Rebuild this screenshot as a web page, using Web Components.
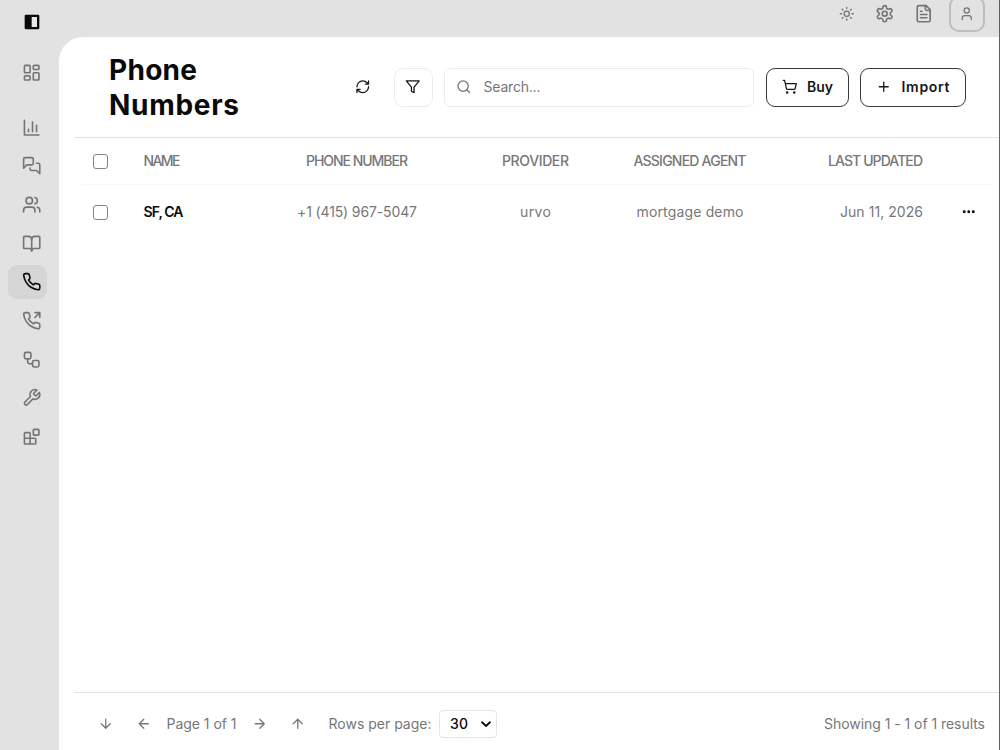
<!DOCTYPE html>
<html lang="en">
<head>
<meta charset="utf-8">
<title>Phone Numbers</title>
<style>
  html, body { margin: 0; height: 100%; overflow: hidden; }
  body { font: 14px/20px Inter, "Liberation Sans", sans-serif; color: #777; background: #e2e2e2; }
</style>
</head>
<body>
<app-shell></app-shell>

<script>
const ICONS = {
  dashboard: '<rect x="3" y="3" width="7" height="9" rx="1"/><rect x="14" y="3" width="7" height="5" rx="1"/><rect x="14" y="12" width="7" height="9" rx="1"/><rect x="3" y="16" width="7" height="5" rx="1"/>',
  chart: '<path d="M3 3v18h18M18 17V9M13 17V5M8 17v-3"/>',
  messages: '<path d="M14 9a2 2 0 0 1-2 2H6l-4 4V4a2 2 0 0 1 2-2h8a2 2 0 0 1 2 2z"/><path d="M18 9h2a2 2 0 0 1 2 2v11l-4-4h-6a2 2 0 0 1-2-2v-1"/>',
  users: '<path d="M16 21v-2a4 4 0 0 0-4-4H6a4 4 0 0 0-4 4v2"/><circle cx="9" cy="7" r="4"/><path d="M22 21v-2a4 4 0 0 0-3-3.87M16 3.13a4 4 0 0 1 0 7.75"/>',
  book: '<path d="M12 7v14"/><path d="M3 18a1 1 0 0 1-1-1V4a1 1 0 0 1 1-1h5a4 4 0 0 1 4 4 4 4 0 0 1 4-4h5a1 1 0 0 1 1 1v13a1 1 0 0 1-1 1h-6a3 3 0 0 0-3 3 3 3 0 0 0-3-3z"/>',
  phone: '<path d="M22 16.92v3a2 2 0 0 1-2.18 2 19.79 19.79 0 0 1-8.63-3.07 19.5 19.5 0 0 1-6-6 19.79 19.79 0 0 1-3.07-8.67A2 2 0 0 1 4.11 2h3a2 2 0 0 1 2 1.72 12.84 12.84 0 0 0 .7 2.81 2 2 0 0 1-.45 2.11L8.09 9.91a16 16 0 0 0 6 6l1.27-1.27a2 2 0 0 1 2.11-.45 12.84 12.84 0 0 0 2.81.7A2 2 0 0 1 22 16.92z"/>',
  workflow: '<rect x="3" y="3" width="8" height="8" rx="2"/><path d="M7 11v4a2 2 0 0 0 2 2h4"/><rect x="13" y="13" width="8" height="8" rx="2"/>',
  wrench: '<path d="M14.7 6.3a1 1 0 0 0 0 1.4l1.6 1.6a1 1 0 0 0 1.4 0l3.77-3.77a6 6 0 0 1-7.94 7.94l-6.91 6.91a2.12 2.12 0 0 1-3-3l6.91-6.91a6 6 0 0 1 7.94-7.94l-3.76 3.76z"/>',
  blocks: '<rect x="14" y="3" width="7" height="7" rx="1"/><path d="M10 21V8a1 1 0 0 0-1-1H4a1 1 0 0 0-1 1v12a1 1 0 0 0 1 1h12a1 1 0 0 0 1-1v-5a1 1 0 0 0-1-1H3"/>',
  sun: '<circle cx="12" cy="12" r="4"/><path d="M12 2v2M12 20v2M4.93 4.93l1.41 1.41M17.66 17.66l1.41 1.41M2 12h2M20 12h2M6.34 17.66l-1.41 1.41M19.07 4.93l-1.41 1.41"/>',
  settings: '<path d="M12.22 2h-.44a2 2 0 0 0-2 2v.18a2 2 0 0 1-1 1.73l-.43.25a2 2 0 0 1-2 0l-.15-.08a2 2 0 0 0-2.73.73l-.22.38a2 2 0 0 0 .73 2.73l.15.1a2 2 0 0 1 1 1.72v.51a2 2 0 0 1-1 1.74l-.15.09a2 2 0 0 0-.73 2.73l.22.38a2 2 0 0 0 2.73.73l.15-.08a2 2 0 0 1 2 0l.43.25a2 2 0 0 1 1 1.73V20a2 2 0 0 0 2 2h.44a2 2 0 0 0 2-2v-.18a2 2 0 0 1 1-1.73l.43-.25a2 2 0 0 1 2 0l.15.08a2 2 0 0 0 2.73-.73l.22-.39a2 2 0 0 0-.73-2.73l-.15-.08a2 2 0 0 1-1-1.74v-.5a2 2 0 0 1 1-1.74l.15-.09a2 2 0 0 0 .73-2.73l-.22-.38a2 2 0 0 0-2.73-.73l-.15.08a2 2 0 0 1-2 0l-.43-.25a2 2 0 0 1-1-1.73V4a2 2 0 0 0-2-2z"/><circle cx="12" cy="12" r="3"/>',
  file: '<path d="M15 2H6a2 2 0 0 0-2 2v16a2 2 0 0 0 2 2h12a2 2 0 0 0 2-2V7Z"/><path d="M14 2v4a2 2 0 0 0 2 2h4M10 9H8M16 13H8M16 17H8"/>',
  user: '<path d="M19 21v-2a4 4 0 0 0-4-4H9a4 4 0 0 0-4 4v2"/><circle cx="12" cy="7" r="4"/>',
  refresh: '<path d="M3 12a9 9 0 0 1 9-9 9.75 9.75 0 0 1 6.74 2.74L21 8M21 3v5h-5M21 12a9 9 0 0 1-9 9 9.75 9.75 0 0 1-6.74-2.74L3 16M8 16H3v5"/>',
  filter: '<path d="M22 3H2l8 9.46V19l4 2v-8.54z"/>',
  search: '<circle cx="11" cy="11" r="8"/><path d="m21 21-4.3-4.3"/>',
  cart: '<circle cx="8" cy="21" r="1"/><circle cx="19" cy="21" r="1"/><path d="M2.05 2.05h2l2.66 12.42a2 2 0 0 0 2 1.58h9.78a2 2 0 0 0 1.95-1.57l1.65-7.43H5.12"/>',
  plus: '<path d="M5 12h14M12 5v14"/>',
  dots: '<g fill="currentColor"><circle cx="12" cy="12" r="1"/><circle cx="19" cy="12" r="1"/><circle cx="5" cy="12" r="1"/></g>',
  down: '<path d="M12 5v14M19 12l-7 7-7-7"/>',
  left: '<path d="m12 19-7-7 7-7M19 12H5"/>',
  right: '<path d="M5 12h14M12 5l7 7-7 7"/>',
  up: '<path d="m5 12 7-7 7 7M12 19V5"/>',
  chevron: '<path d="m4 8.5 8 7.5 8-7.5"/>',
  panel: '<rect x="1" y="1" width="22" height="22" rx="2" fill="currentColor" stroke="none"/><path d="M11.5 4.5h8v15h-8z" fill="#e9e9e9" stroke="none"/>'
};
ICONS.outgoing = ICONS.phone + '<path d="M22 8V2h-6M16 8l6-6"/>';

class UiIcon extends HTMLElement {
  constructor() {
    super();
    this.attachShadow({ mode: 'open' });
  }

  connectedCallback() {
    const size = this.getAttribute('size') || '19.4';
    const stroke = this.getAttribute('stroke') || '2';
    this.shadowRoot.innerHTML = `
      <style>
        :host { display: block; flex: none; width: ${size}px; height: ${size}px; }
        svg { display: block; width: 100%; height: 100%; overflow: visible; }
      </style>
      <svg viewBox="0 0 24 24" fill="none" stroke="currentColor" stroke-width="${stroke}"
        stroke-linecap="round" stroke-linejoin="round">${ICONS[this.getAttribute('name')]}</svg>
    `;
  }
}
customElements.define('ui-icon', UiIcon);

// One line of text, tracked so that it fills the given width.
class FitText extends HTMLElement {
  constructor() {
    super();
    this.attachShadow({ mode: 'open' });
    this.shadowRoot.innerHTML = `
      <style>
        :host { display: block; flex: none; white-space: nowrap; }
        span { display: inline-block; }
      </style>
      <span><slot></slot></span>
    `;
  }

  connectedCallback() {
    const width = parseFloat(this.getAttribute('width'));
    const span = this.shadowRoot.querySelector('span');
    const natural = span.getBoundingClientRect().width;
    const count = this.textContent.length;
    if (!natural || !count) return;
    const tracking = (width - natural) / (count - 1);
    span.style.letterSpacing = `${tracking}px`;
    span.style.marginRight = `${-tracking}px`;
  }
}
customElements.define('fit-text', FitText);

class NavItem extends HTMLElement {
  constructor() {
    super();
    this.attachShadow({ mode: 'open' });
  }

  connectedCallback() {
    this.shadowRoot.innerHTML = `
      <style>
        :host { display: flex; align-items: center; height: 34.8px; padding-left: 13.6px; border-radius: 9px; color: #747474; }
        :host([active]) { background: #d5d5d5; color: #0a0a0a; }
      </style>
      <ui-icon name="${this.getAttribute('icon')}"></ui-icon>
    `;
  }
}
customElements.define('nav-item', NavItem);

class SideBar extends HTMLElement {
  constructor() {
    super();
    this.attachShadow({ mode: 'open' });
  }

  connectedCallback() {
    this.shadowRoot.innerHTML = `
      <style>
        :host { display: block; box-sizing: border-box; padding: 13.5px 12px 0 8px; }
        .logo { display: flex; height: 17px; margin: 0 0 25.2px 16px; color: #090909; }
        .group { display: grid; gap: 3.85px; margin-top: 19.5px; }
      </style>
      <div class="logo"><ui-icon name="panel" size="16"></ui-icon></div>
      <nav-item icon="dashboard"></nav-item>
      <div class="group">
        <nav-item icon="chart"></nav-item>
        <nav-item icon="messages"></nav-item>
        <nav-item icon="users"></nav-item>
        <nav-item icon="book"></nav-item>
        <nav-item icon="phone" active></nav-item>
        <nav-item icon="outgoing"></nav-item>
        <nav-item icon="workflow"></nav-item>
        <nav-item icon="wrench"></nav-item>
        <nav-item icon="blocks"></nav-item>
      </div>
    `;
  }
}
customElements.define('side-bar', SideBar);

class TopBar extends HTMLElement {
  constructor() {
    super();
    this.attachShadow({ mode: 'open' });
  }

  connectedCallback() {
    this.shadowRoot.innerHTML = `
      <style>
        :host { display: flex; align-items: center; justify-content: flex-end; box-sizing: border-box; height: 37px; padding: 0 14.5px 10px 0; overflow: hidden; color: #747474; }
        .sun { margin-right: 20.5px; }
        .settings { margin-right: 19.2px; }
        .file { margin-right: 15.5px; }
        .avatar { display: grid; place-items: center; box-sizing: border-box; width: 36px; height: 36px; margin: -6px 0; border: 2px solid #bdbdbd; border-radius: 10px; }
      </style>
      <ui-icon class="sun" name="sun" size="15.5"></ui-icon>
      <ui-icon class="settings" name="settings"></ui-icon>
      <ui-icon class="file" name="file"></ui-icon>
      <div class="avatar"><ui-icon name="user" size="15.5"></ui-icon></div>
    `;
  }
}
customElements.define('top-bar', TopBar);

class UiButton extends HTMLElement {
  constructor() {
    super();
    this.attachShadow({ mode: 'open' });
  }

  connectedCallback() {
    this.shadowRoot.innerHTML = `
      <style>
        :host { display: flex; flex: none; align-items: center; box-sizing: border-box; height: 39px; padding: 0 15px; gap: 9.5px; border: 1px solid #3a3a3a; border-radius: 9px; color: #171717; font-weight: 600; }
        :host([subtle]) { width: 39px; padding: 0; justify-content: center; border-color: #ececec; }
        :host([ghost]) { width: 39px; padding: 0; justify-content: center; border-color: transparent; }
      </style>
      <ui-icon name="${this.getAttribute('icon')}" size="15.5"></ui-icon><slot></slot>
    `;
  }
}
customElements.define('ui-button', UiButton);

class PageHeader extends HTMLElement {
  constructor() {
    super();
    this.attachShadow({ mode: 'open' });
  }

  connectedCallback() {
    this.shadowRoot.innerHTML = `
      <style>
        :host { display: flex; align-items: center; box-sizing: border-box; height: 101px; padding: 0 33.5px 0 35px; border-bottom: 1px solid #e3e3e3; }
        h1 { margin: 0; padding-top: 2px; width: 234.5px; font-size: 28px; line-height: 34.8px; font-weight: 700; color: #0a0a0a; }
        .search { display: flex; flex: 1; align-items: center; box-sizing: border-box; height: 39px; margin: 0 12px 0 11px; padding-left: 11.5px; gap: 12px; border: 1px solid #ececec; border-radius: 6px; }
        .buy { margin-right: 11px; width: 83px; }
        .import { width: 105.5px; }
        .import fit-text { margin-left: 0.5px; }
        .refresh { margin-right: 11px; }
      </style>
      <h1><fit-text width="88">Phone</fit-text><fit-text width="130">Numbers</fit-text></h1>
      <ui-button class="refresh" ghost icon="refresh"></ui-button>
      <ui-button subtle icon="filter"></ui-button>
      <div class="search"><ui-icon name="search" size="15.5"></ui-icon><fit-text width="57">Search...</fit-text></div>
      <ui-button class="buy" icon="cart"><fit-text width="26">Buy</fit-text></ui-button>
      <ui-button class="import" icon="plus"><fit-text width="48">Import</fit-text></ui-button>
    `;
  }
}
customElements.define('page-header', PageHeader);

class TableRow extends HTMLElement {
  constructor() {
    super();
    this.attachShadow({ mode: 'open' });
    this.shadowRoot.innerHTML = `
      <style>
        :host { display: grid; grid-template-columns: 61px 124px 180px 177px 132px 167px 1fr; align-items: center; justify-items: center; height: 54px; margin: 0 7px 0 8px; }
        :host([head]) { height: 46px; border-bottom: 1px solid #f7f7f7; font-weight: 500; }
        i { box-sizing: border-box; width: 15px; height: 15px; justify-self: start; margin-left: 11px; border: 1px solid #848484; border-radius: 3px; }
        ::slotted([slot=name]) { justify-self: start; margin-left: 0.5px; }
        ::slotted([slot=updated]) { justify-self: end; }
        ::slotted([slot=menu]) { margin-left: 22.5px; color: #0a0a0a; }
      </style>
      <i></i><slot name="name"></slot><slot></slot><slot name="updated"></slot><slot name="menu"></slot>
    `;
  }
}
customElements.define('table-row', TableRow);

class NumberTable extends HTMLElement {
  constructor() {
    super();
    this.attachShadow({ mode: 'open' });
  }

  connectedCallback() {
    this.shadowRoot.innerHTML = `
      <style>
        :host { display: block; flex: 1; }
        .strong { color: #0a0a0a; font-weight: 600; }
      </style>
      <table-row head>
        <fit-text slot="name" width="37">NAME</fit-text>
        <fit-text width="102">PHONE NUMBER</fit-text>
        <fit-text width="67">PROVIDER</fit-text>
        <fit-text width="113">ASSIGNED AGENT</fit-text>
        <fit-text slot="updated" width="95">LAST UPDATED</fit-text>
      </table-row>
      <table-row>
        <fit-text class="strong" slot="name" width="40">SF, CA</fit-text>
        <fit-text width="120">+1 (415) 967-5047</fit-text>
        <fit-text width="31">urvo</fit-text>
        <fit-text width="107">mortgage demo</fit-text>
        <fit-text slot="updated" width="83">Jun 11, 2026</fit-text>
        <ui-icon slot="menu" name="dots" size="15.5" stroke="2.5"></ui-icon>
      </table-row>
    `;
  }
}
customElements.define('number-table', NumberTable);

class PageFooter extends HTMLElement {
  constructor() {
    super();
    this.attachShadow({ mode: 'open' });
  }

  connectedCallback() {
    this.shadowRoot.innerHTML = `
      <style>
        :host { display: flex; align-items: center; box-sizing: border-box; height: 58px; padding: 4px 14px 0 23.5px; border-top: 1px solid #e3e3e3; }
        .pager { display: flex; align-items: center; }
        .left { margin: 0 15px 0 23px; }
        .right { margin: 0 23px 0 15px; }
        .rows { margin: 0 7.5px 0 23px; }
        .select { display: flex; align-items: center; justify-content: space-between; box-sizing: border-box; width: 58px; height: 28px; padding: 0 4px 0 10px; border: 1px solid #e5e5e5; border-radius: 4px; color: #0a0a0a; font-weight: 500; }
        .total { margin-left: auto; }
      </style>
      <div class="pager">
        <ui-icon name="down" size="15.5"></ui-icon>
        <ui-icon class="left" name="left" size="15.5"></ui-icon>
        <fit-text width="70">Page 1 of 1</fit-text>
        <ui-icon class="right" name="right" size="15.5"></ui-icon>
        <ui-icon name="up" size="15.5"></ui-icon>
      </div>
      <fit-text class="rows" width="103">Rows per page:</fit-text>
      <div class="select"><fit-text width="18">30</fit-text><ui-icon name="chevron" size="12" stroke="3.6"></ui-icon></div>
      <fit-text class="total" width="161">Showing 1 - 1 of 1 results</fit-text>
    `;
  }
}
customElements.define('page-footer', PageFooter);

class AppShell extends HTMLElement {
  constructor() {
    super();
    this.attachShadow({ mode: 'open' });
  }

  connectedCallback() {
    this.shadowRoot.innerHTML = `
      <style>
        :host { display: grid; grid-template: 37px 1fr / 59px 1fr; box-sizing: border-box; height: 100vh; border-right: 1px solid #606060; background: #e2e2e2; }
        side-bar { grid-row: 1 / 3; }
        main { display: flex; flex-direction: column; min-width: 0; padding-left: 15px; border-top-left-radius: 24px; background: #fff; }
      </style>
      <side-bar></side-bar>
      <top-bar></top-bar>
      <main>
        <page-header></page-header>
        <number-table></number-table>
        <page-footer></page-footer>
      </main>
    `;
  }
}
customElements.define('app-shell', AppShell);
</script>
</body>
</html>
